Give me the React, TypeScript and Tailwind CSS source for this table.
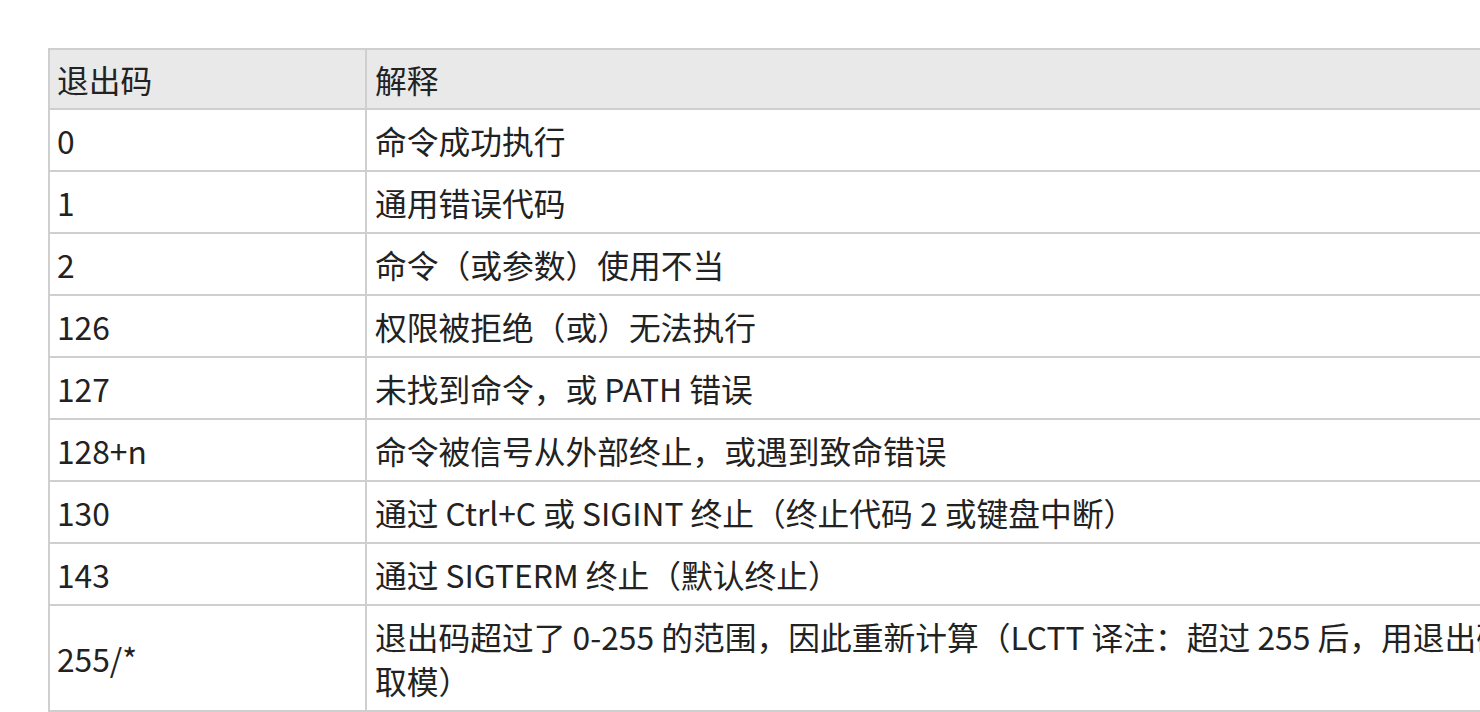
const rows: [string, React.ReactNode][] = [
  ["0", "命令成功执行"],
  ["1", "通用错误代码"],
  ["2", "命令（或参数）使用不当"],
  ["126", "权限被拒绝（或）无法执行"],
  ["127", "未找到命令，或 PATH 错误"],
  ["128+n", "命令被信号从外部终止，或遇到致命错误"],
  ["130", "通过 Ctrl+C 或 SIGINT 终止（终止代码 2 或键盘中断）"],
  ["143", "通过 SIGTERM 终止（默认终止）"],
  [
    "255/*",
    <>
      退出码超过了 0-255 的范围，因此重新计算（LCTT 译注：超过 255 后，用退出码对 256
      <br />
      取模）
    </>,
  ],
];

export default function App() {
  return (
    <div className="w-screen h-screen overflow-hidden bg-white">
      <div className="pt-[48px] pl-[48px]">
        <table
          className="w-[1700px] border-collapse text-[31.75px] leading-[44px] text-[#222]"
          style={{ fontFamily: '"Noto Sans CJK SC", sans-serif' }}
        >
          <thead>
            <tr className="bg-[#e9e9e9]">
              <th className="w-[317px] border-2 border-[#cfcfcf] px-[7px] py-[7px] text-left font-normal">退出码</th>
              <th className="border-2 border-[#cfcfcf] px-[8px] py-[7px] text-left font-normal">解释</th>
            </tr>
          </thead>
          <tbody>
            {rows.map(([code, desc]) => (
              <tr key={code}>
                <td className="border-2 border-[#cfcfcf] px-[7px] py-[8px] align-middle">{code}</td>
                <td className="border-2 border-[#cfcfcf] px-[8px] py-[8px] align-middle">{desc}</td>
              </tr>
            ))}
          </tbody>
        </table>
      </div>
    </div>
  );
}
